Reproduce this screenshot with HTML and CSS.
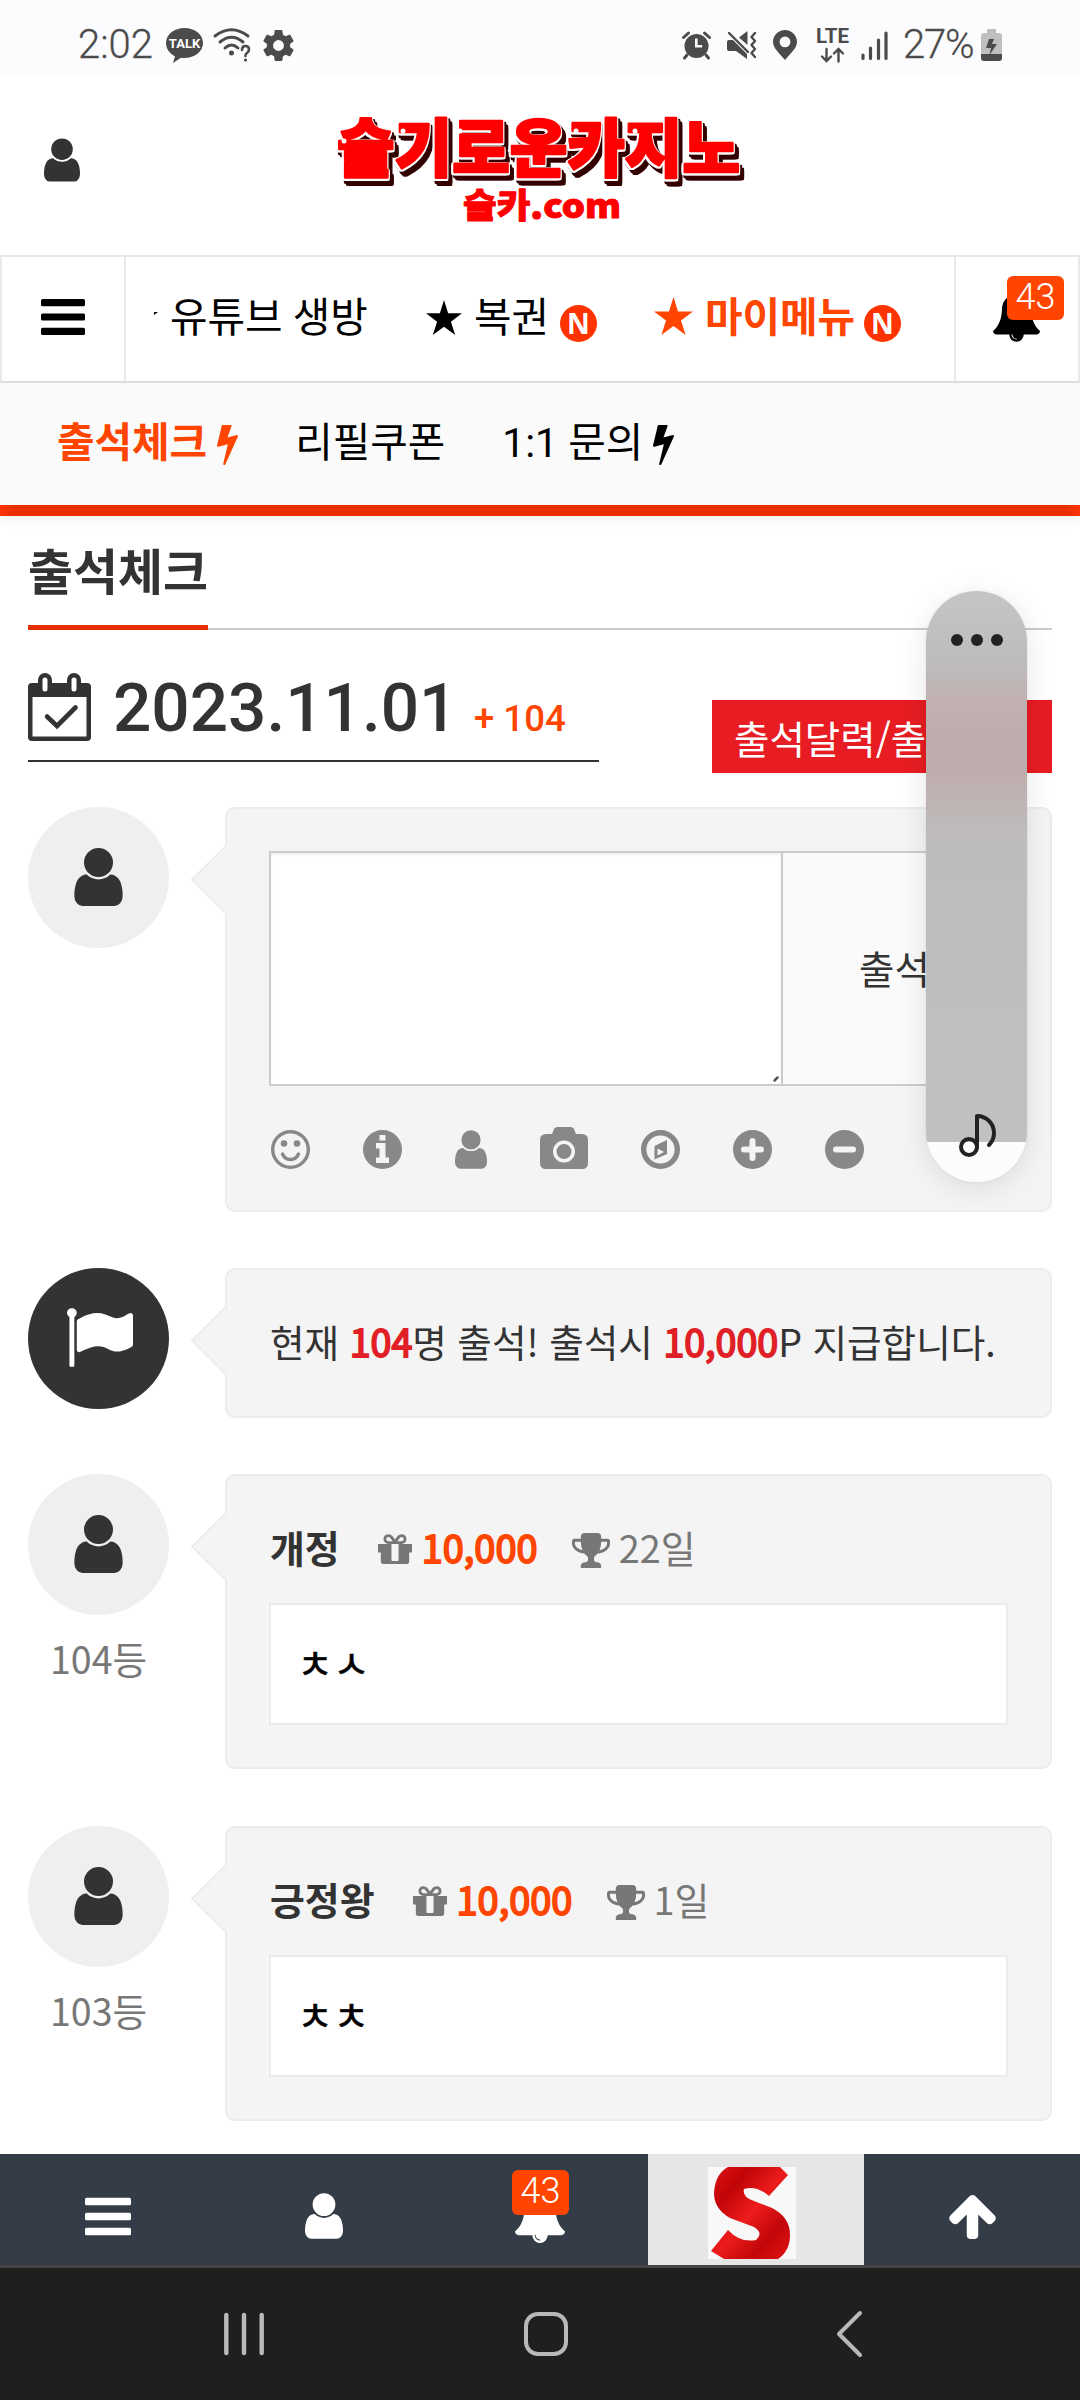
FILE: index.html
```html
<!DOCTYPE html>
<html lang="ko">
<head>
<meta charset="utf-8">
<title>출석체크</title>
<link rel="stylesheet" href="styles.css">
</head>
<body>
<svg class="defs" width="0" height="0">
  <symbol id="user" viewBox="0 128 1280 1536"><path d="M1280 1399q0 109-62.500 187t-150.500 78h-854q-88 0-150.500-78t-62.500-187q0-85 8.500-160.500t31.500-152 58.500-131 94-89 134.500-34.500q131 128 313 128t313-128q76 0 134.500 34.500t94 89 58.500 131 31.500 152 8.500 160.500zm-256-887q0 159-112.500 271.500t-271.500 112.500-271.500-112.500-112.500-271.500 112.500-271.500 271.500-112.500 271.500 112.500 112.500 271.500z"/></symbol>
  <symbol id="bars" viewBox="0 0 44 36"><rect width="44" height="7.200" rx="1.500"/><rect y="14.400" width="44" height="7.200" rx="1.500"/><rect y="28.800" width="44" height="7.200" rx="1.500"/></symbol>
  <symbol id="bolt" viewBox="0 0 896 1664" preserveAspectRatio="none"><path d="M885 438q18 20 7 44l-540 1157q-13 25-42 25-4 0-14-2-17-5-25.500-19t-4.500-30l197-808-406 101q-4 1-12 1-18 0-31-11-18-15-13-39l201-825q4-16 17-26t31-10h328q19 0 32 12.500t13 29.500q0 8-5 18l-171 463 396-98q8-2 12-2 19 0 34 15z"/></symbol>
  <symbol id="bell" viewBox="64 0 1664 1792"><path d="M912 1696q0-16-16-16-59 0-101.500-42.500t-42.500-101.500q0-16-16-16t-16 16q0 73 51.500 124.500t124.500 51.500q16 0 16-16zm816-288q0 52-38 90t-90 38h-448q0 106-75 181t-181 75-181-75-75-181h-448q-52 0-90-38t-38-90q50-42 91-88t85-119.500 74.500-158.500 50-206 19.500-260q0-152 117-282.500t307-158.500q-8-19-8-39 0-40 28-68t68-28 68 28 28 68q0 20-8 39 190 28 307 158.500t117 282.500q0 139 19.500 260t50 206 74.500 158.500 85 119.500 91 88z"/></symbol>
  <symbol id="gift" viewBox="0 192 1536 1344"><path d="M928 1356v-716h-320v716q0 25 18 38.500t46 13.500h192q28 0 46-13.500t18-38.500zm-456-844h195l-126-161q-26-31-69-31-40 0-68 28t-28 68 28 68 68 28zm688-96q0-40-28-68t-68-28q-43 0-69 31l-125 161h194q40 0 68-28t28-68zm376 256v320q0 14-9 23t-23 9h-96v416q0 40-28 68t-68 28h-1088q-40 0-68-28t-28-68v-416h-96q-14 0-23-9t-9-23v-320q0-14 9-23t23-9h440q-93 0-158.500-65.500t-65.500-158.500 65.500-158.500 158.500-65.500q107 0 168 77l128 165 128-165q61-77 168-77 93 0 158.500 65.500t65.500 158.500-65.500 158.500-158.500 65.500h440q14 0 23 9t9 23z"/></symbol>
  <symbol id="trophy" viewBox="64 128 1664 1536"><path d="M522 883q-74-162-74-371h-256v96q0 78 94.500 162t235.500 113zm1078-275v-96h-256q0 209-74 371 141-29 235.500-113t94.500-162zm128-128v128q0 71-41.500 143t-112 130-173 97.500-215.500 44.500q-42 54-95 95-38 34-52.500 72.500t-14.500 89.500q0 54 30.500 91t97.500 37q75 0 133.500 45.500t58.500 114.500v64q0 14-9 23t-23 9h-832q-14 0-23-9t-9-23v-64q0-69 58.500-114.500t133.500-45.500q67 0 97.500-37t30.500-91q0-51-14.500-89.500t-52.500-72.500q-53-41-95-95-113-5-215.500-44.500t-173-97.500-112-130-41.500-143v-128q0-40 28-68t68-28h288v-96q0-66 47-113t113-47h576q66 0 113 47t47 113v96h288q40 0 68 28t28 68z"/></symbol>
  <symbol id="star" viewBox="0 0 39 38"><path d="M19.500 0l4.500 14.500H39L27 23.500 31.600 38l-12.100-9L7.400 38 12 23.500 0 14.500h15z"/></symbol>
</svg>

<div class="statusbar">
  <span class="clock">2:02</span>
  <svg class="st-talk" viewBox="0 0 37 35"><path d="M18.500 0C8.300 0 0 6.600 0 15c0 6 4 10.800 9 13.200L7 35l8-5.200c1.200.2 2.400.2 3.500.2C28.700 30 37 23.400 37 15S28.700 0 18.500 0z"/><text x="18.500" y="20" text-anchor="middle">TALK</text></svg>
  <svg class="st-wifi" viewBox="0 0 38 34"><g fill="none" stroke="#4b4b4b" stroke-width="3" stroke-linecap="round"><path d="M2 8Q18.500-4.500 35 8M7 14Q18.500 4.500 30 14M12 20Q18.500 14 25 20"/><path d="M29 22q0-4 3.500-4t3.500 3.500q0 2-2 3.500t-1.500 3" stroke-width="2.600"/></g><circle cx="18.500" cy="25" r="2.500"/><circle cx="32.500" cy="32" r="1.600"/></svg>
  <svg class="st-gear" viewBox="2 2 20 20"><path d="M19.430 12.980c.04-.32.07-.64.07-.98s-.03-.66-.07-.98l2.110-1.650c.19-.15.24-.42.12-.64l-2-3.460c-.12-.22-.39-.3-.61-.22l-2.490 1c-.52-.4-1.080-.73-1.690-.98l-.38-2.650A.488.488 0 0 0 14 2h-4c-.25 0-.46.18-.49.42l-.38 2.650c-.61.25-1.170.59-1.690.98l-2.490-1c-.23-.09-.49 0-.61.22l-2 3.460c-.13.22-.07.49.12.64l2.110 1.650c-.04.32-.07.65-.07.98s.03.66.07.98l-2.110 1.650c-.19.15-.24.42-.12.64l2 3.460c.12.22.39.3.61.22l2.490-1c.52.4 1.080.73 1.690.98l.38 2.650c.03.24.24.42.49.42h4c.25 0 .46-.18.49-.42l.38-2.650c.61-.25 1.170-.59 1.690-.98l2.490 1c.23.09.49 0 .61-.22l2-3.460c.12-.22.07-.49-.12-.64zM12 15.500A3.500 3.500 0 1 1 12 8.500a3.500 3.500 0 0 1 0 7z"/></svg>
  <span class="grow"></span>
  <svg class="st-alarm" viewBox="0 0 29 28"><path fill-rule="evenodd" d="M14.500 3a12 12 0 1 0 0 24 12 12 0 0 0 0-24zM13 7.500h2.600V14h4.600v2.600H13z"/><path d="M1.500 6.500l5-4.500M27.500 6.500l-5-4.500M5 24l-2.500 3M24 24l2.500 3" stroke="#4b4b4b" stroke-width="3" stroke-linecap="round"/></svg>
  <svg class="st-mute" viewBox="0 0 30 28"><path d="M0 11q0-2 2-2h4l14 14v5L9 20H2q-2 0-2-2zM20.500 0v14L12 6.500z"/><path d="M2 2l19 19" stroke="#4b4b4b" stroke-width="2.400" stroke-linecap="round"/><path d="M28 2l-3.500 4L28 10l-3.500 4L28 18l-3.500 4L28 26" fill="none" stroke="#4b4b4b" stroke-width="2.400" stroke-linecap="round" stroke-linejoin="round"/></svg>
  <svg class="st-pin" viewBox="0 0 24 30"><path fill-rule="evenodd" d="M12 0C5.400 0 0 5.200 0 11.800 0 18 6 23 12 30c6-7 12-12 12-18.200C24 5.200 18.600 0 12 0zm0 6.500a5.400 5.400 0 1 1 0 10.800 5.400 5.400 0 0 1 0-10.800z"/></svg>
  <span class="st-lte"><b>LTE</b><svg viewBox="0 0 24 14"><path d="M5.500 1v11.500M1 8.500l4.500 4.500L10 8.500M17.500 13.500V1.500M13 5.500L17.500 1 22 5.500" fill="none" stroke="#4b4b4b" stroke-width="2.400" stroke-linecap="round"/></svg></span>
  <svg class="st-signal" viewBox="0 0 27 29"><path d="M2 24v3.500M9.500 17v10.500M17.500 9v18.500M25 2v25.500" stroke="#4b4b4b" stroke-width="3.200" stroke-linecap="round"/></svg>
  <span class="percent">27%</span>
  <svg class="st-batt" viewBox="0 0 21 32"><path fill="#bfbfbf" d="M6 0h9v4h3q3 0 3 3v19H0V7q0-3 3-3h3z"/><path d="M0 25h21v4q0 3-3 3H3q-3 0-3-3z"/><path d="M8 10h5l-2 5h5L8.500 26l1.500-7H5z"/></svg>
</div>

<header class="header">
  <svg class="header-user"><use href="#user"/></svg>
  <svg class="logo" viewBox="0 0 420 112">
    <g class="logo-main">
      <text x="7" y="57" textLength="403" lengthAdjust="spacingAndGlyphs">슬기로운카지노</text>
    </g>
    <g fill="#fff"><circle cx="14" cy="27" r="2.500"/><circle cx="73" cy="17" r="2.500"/><circle cx="130" cy="17" r="2.500"/><circle cx="246" cy="17" r="2.500"/><circle cx="305" cy="17" r="2.500"/></g>
    <text class="logo-sub" x="133" y="104" textLength="158" lengthAdjust="spacingAndGlyphs">슬카.com</text>
  </svg>
</header>

<nav class="nav">
  <a class="nav-side"><svg class="nav-bars"><use href="#bars"/></svg></a>
  <div class="nav-list">
    <svg class="nav-tip" viewBox="0 0 4 3"><path d="M0 0h4L0 3z"/></svg>
    <a class="nav-a">유튜브 생방</a>
    <a class="nav-b"><svg><use href="#star"/></svg><span>복권</span><i class="new">N</i></a>
    <a class="nav-c"><svg><use href="#star"/></svg><span>마이메뉴</span><i class="new">N</i></a>
  </div>
  <a class="nav-side nav-alarm"><svg class="bell"><use href="#bell"/></svg><span class="count">43</span></a>
</nav>

<div class="subnav">
  <a class="on"><span>출석체크</span><svg><use href="#bolt"/></svg></a>
  <a><span>리필쿠폰</span></a>
  <a><span>1:1 문의</span><svg><use href="#bolt"/></svg></a>
</div>
<div class="redline"></div>

<main class="main">
  <h1 class="title"><span>출석체크</span></h1>

  <div class="daybar">
    <div class="day">
      <svg class="cal" viewBox="0 0 63 68"><path fill-rule="evenodd" d="M4 10h6V7a7 7 0 0 1 14 0v3h15V7a7 7 0 0 1 14 0v3h6q4 0 4 4v50q0 4-4 4H4q-4 0-4-4V14q0-4 4-4zM4.500 24v39.500h54V24zM14.500 7v9a2.500 2.500 0 0 0 5 0V7a2.500 2.500 0 0 0-5 0zm29 0v9a2.500 2.500 0 0 0 5 0V7a2.500 2.500 0 0 0-5 0z"/><path d="M19 43.500l10 9.500 18.500-18.500" fill="none" stroke="#333" stroke-width="4.600" stroke-linecap="round"/></svg>
      <span class="date">2023.11.01</span>
      <span class="plus">+ 104</span>
    </div>
    <a class="calbtn">출석달력/출석부</a>
  </div>

  <section class="post">
    <div class="who"><div class="avatar"><svg><use href="#user"/></svg></div></div>
    <div class="bubble form">
      <div class="field"><div class="area"><svg viewBox="0 0 6 6"><path d="M1.500 4.500l3-3" stroke="#555" stroke-width="2.500" stroke-linecap="round"/></svg></div><div class="submit">출석</div></div>
      <div class="tools">
        <svg viewBox="0 0 39 39"><circle cx="19.500" cy="19.500" r="17.800" fill="none" stroke="#888" stroke-width="3.400"/><circle cx="13" cy="13.500" r="3.300"/><circle cx="26" cy="13.500" r="3.300"/><path d="M11.500 24q2.500 5.500 8 5.500t8-5.500" fill="none" stroke="#888" stroke-width="3.400" stroke-linecap="round"/></svg>
        <svg viewBox="0 0 39 39"><circle cx="19.500" cy="19.500" r="19.500"/><path fill="#f4f4f4" d="M16.500 5h6v5.500h-6zM13 13h9.500v14.500H26V33H13v-5.500h3.500v-9H13z"/></svg>
        <svg class="t-user"><use href="#user"/></svg>
        <svg class="t-cam" viewBox="0 0 48 42"><path fill-rule="evenodd" d="M6 7h6l2-5q1-2 3.500-2h13q2.500 0 3.500 2l2 5h6q6 0 6 6v23q0 6-6 6H6q-6 0-6-6V13q0-6 6-6zm18 6.500a11 11 0 1 0 0 22 11 11 0 0 0 0-22zm0 3.500a7.500 7.500 0 1 1 0 15 7.500 7.500 0 0 1 0-15z"/></svg>
        <svg viewBox="0 0 39 39"><circle cx="19.500" cy="19.500" r="16.800" fill="none" stroke="#888" stroke-width="5.400"/><path fill-rule="evenodd" d="M26 10v14L13.500 29.500V16zM16.500 18.500v7l6.500-3.600z"/></svg>
        <svg viewBox="0 0 39 39"><circle cx="19.500" cy="19.500" r="19.500"/><path d="M11 19.500h17M19.500 11v17" stroke="#f4f4f4" stroke-width="6" stroke-linecap="round"/></svg>
        <svg viewBox="0 0 39 39"><circle cx="19.500" cy="19.500" r="19.500"/><path d="M11 19.500h17" stroke="#f4f4f4" stroke-width="6" stroke-linecap="round"/></svg>
      </div>
    </div>
  </section>

  <section class="post">
    <div class="who"><div class="avatar dark"><svg class="flag" viewBox="64 128 1728 1536"><path d="M320 256q0 72-64 110v1266q0 13-9.500 22.500t-22.500 9.500h-64q-13 0-22.500-9.500t-9.500-22.500v-1266q-64-38-64-110 0-53 37.500-90.500t90.500-37.500 90.500 37.500 37.500 90.500zm1472 64v763q0 25-12.500 38.500t-39.500 27.500q-215 116-369 116-61 0-123.500-22t-108.500-48-115.500-48-142.500-22q-192 0-464 146-17 9-33 9-26 0-45-19t-19-45v-742q0-32 31-55 21-14 79-43 236-120 421-120 107 0 200 29t219 88q38 19 88 19 54 0 117.500-21t110-47 88-47 54.500-21q26 0 45 19t19 45z"/></svg></div></div>
    <div class="bubble notice"><p>현재 <b>104</b>명 출석! 출석시 <b>10,000</b>P 지급합니다.</p></div>
  </section>

  <section class="post">
    <div class="who"><div class="avatar"><svg><use href="#user"/></svg></div><span class="rank">104등</span></div>
    <div class="bubble entry">
      <div class="meta"><b class="name">개정</b><svg class="gift"><use href="#gift"/></svg><b class="point">10,000</b><svg class="trophy"><use href="#trophy"/></svg><span class="days">22일</span></div>
      <div class="say">ㅊㅅ</div>
    </div>
  </section>

  <section class="post">
    <div class="who"><div class="avatar"><svg><use href="#user"/></svg></div><span class="rank">103등</span></div>
    <div class="bubble entry">
      <div class="meta"><b class="name">긍정왕</b><svg class="gift"><use href="#gift"/></svg><b class="point">10,000</b><svg class="trophy"><use href="#trophy"/></svg><span class="days">1일</span></div>
      <div class="say">ㅊㅊ</div>
    </div>
  </section>
</main>

<div class="volume">
  <svg class="v-dots" viewBox="0 0 52 12"><circle cx="6" cy="6" r="6"/><circle cx="26" cy="6" r="6"/><circle cx="46" cy="6" r="6"/></svg>
  <svg class="v-note" viewBox="0 0 37 44"><g fill="none" stroke="#222" stroke-width="4" stroke-linecap="round" stroke-linejoin="round"><circle cx="10" cy="33" r="8"/><path d="M18 33V2c10 0 17 8 17 17q0 7-5 12"/></g></svg>
</div>

<footer class="tabbar">
  <a><svg class="tb-bars"><use href="#bars"/></svg></a>
  <a><svg class="tb-user"><use href="#user"/></svg></a>
  <a class="tb-alarm"><svg class="tb-bell"><use href="#bell"/></svg><span class="count">43</span></a>
  <a class="tb-site">
    <svg class="tb-logo" viewBox="0 0 88 92"><defs><linearGradient id="sg" x1="0" y1="0" x2="1" y2="1"><stop offset="0" stop-color="#e01212"/><stop offset=".25" stop-color="#c00508"/><stop offset=".5" stop-color="#ee1c1c"/><stop offset=".75" stop-color="#c2070a"/><stop offset="1" stop-color="#e01212"/></linearGradient></defs><rect width="88" height="92" fill="#f8f8f8"/><path fill="url(#sg)" d="M20 0H72L80 8 61 29Q48 18 36 22 34 30 46 34L64 41Q82 50 82 68 82 84 70 92H16L3 84 20 63Q32 76 48 73 56 66 46 60L22 51Q6 42 6 26 7 7 20 0z"/></svg>
  </a>
  <a><svg class="tb-up" viewBox="117 192 1558 1472"><path d="M1675 971q0 51-37 90l-75 75q-38 38-91 38-54 0-90-38l-294-293v704q0 52-37.500 84.500t-90.500 32.500h-128q-53 0-90.500-32.500t-37.500-84.500v-704l-294 293q-36 38-90 38t-90-38l-75-75q-38-38-38-90 0-53 38-91l651-651q35-37 90-37 54 0 91 37l651 651q37 39 37 91z"/></svg></a>
</footer>

<div class="sysnav">
  <svg class="s-recent" viewBox="0 0 40 42"><path d="M2.300 2v38M20 2v38M37.700 2v38" stroke-width="4.400"/></svg>
  <svg class="s-home" viewBox="0 0 44 44"><rect x="2" y="2" width="40" height="40" rx="12" stroke-width="4"/></svg>
  <svg class="s-back" viewBox="0 0 26 46"><path d="M24 2L3 23l21 21" stroke-width="4"/></svg>
</div>
</body>
</html>
```
FILE: styles.css
```css
* { box-sizing: border-box; }
body {
  margin: 0;
  width: 1080px;
  height: 2400px;
  position: relative;
  overflow: hidden;
  display: flex;
  flex-direction: column;
  background: #fff;
  color: #333;
  font-family: "Noto Sans CJK KR", sans-serif;
}
svg { display: block; flex: none; overflow: visible; }
.defs { position: absolute; }
.grow { flex: 1; }

/* phone status bar */
.statusbar {
  flex: none;
  height: 75px;
  padding: 15px 78px 0;
  display: flex;
  align-items: center;
  background: #fcfcfe;
  fill: #4b4b4b;
  color: #4b4b4b;
  font-family: Roboto, sans-serif;
}
.clock, .percent { font-size: 40px; font-weight: 300; line-height: 60px; -webkit-text-stroke: 0.3px #4b4b4b; }
.clock { width: 88px; }
.percent { width: 78px; letter-spacing: -1.200px; white-space: nowrap; }
.st-talk { width: 37px; height: 35px; }
.st-talk text { font: 700 13px Roboto, sans-serif; fill: #fff; }
.st-wifi { width: 38px; height: 34px; margin-left: 10px; }
.st-gear { width: 31px; height: 33px; margin-left: 12px; }
.st-alarm { width: 29px; height: 28px; }
.st-mute { width: 30px; height: 28px; margin-left: 16px; }
.st-pin { width: 24px; height: 30px; margin-left: 16px; }
.st-lte { width: 33px; margin-left: 19px; display: flex; flex-direction: column; align-items: center; gap: 4px; }
.st-lte b { font-size: 20.500px; line-height: 15px; font-weight: 700; }
.st-lte svg { width: 24px; height: 14px; }
.st-signal { width: 27px; height: 29px; margin: 0 15px 0 12px; }
.st-batt { width: 21px; height: 32px; }

/* site header */
.header { flex: none; height: 180px; display: flex; align-items: flex-start; }
.header-user { width: 36px; height: 44px; margin: 63px 0 0 44px; fill: #333; }
.logo { width: 420px; height: 112px; margin: 39px 0 0 250px; }
.logo text { font-family: "Noto Sans CJK KR", sans-serif; font-weight: 900; stroke-linejoin: round; }
.logo-main {
  filter: drop-shadow(1.5px 0 0 #fff) drop-shadow(-1.5px 0 0 #fff) drop-shadow(0 2px 0 #fff) drop-shadow(2px 3px 0 #300) drop-shadow(2px 2px 0 #300);
}
.logo-main text { font-size: 63px; fill: #f00; stroke: #f00; stroke-width: 2.500px; }
.logo-sub { font-size: 34px; fill: #f00; stroke: #f00; stroke-width: 1px; }

/* main menu */
.nav {
  flex: none;
  height: 128px;
  display: flex;
  border: 2px solid #e9e9e9;
  border-bottom-color: #ddd;
  font-family: Roboto, "Noto Sans CJK KR", sans-serif;
  font-size: 40.800px;
  line-height: 123px;
  color: #000;
}
.nav-side { width: 124px; display: flex; position: relative; }
.nav-side:first-child { border-right: 2px solid #e9e9e9; }
.nav-alarm { border-left: 2px solid #e9e9e9; }
.nav-bars { width: 44px; height: 36px; margin: 42px 0 0 39px; }
.nav-list { flex: 1; display: flex; white-space: nowrap; }
.nav-list a { display: flex; }
.nav-tip { width: 4px; height: 3px; margin: 55px 0 0 28px; }
.nav-a { width: 256px; margin-left: 12px; }
.nav-b svg { width: 36px; height: 35px; margin-top: 43px; }
.nav-b span { width: 86px; margin-left: 12px; }
.nav-c { margin-left: 57px; color: #ff4500; fill: #ff4500; font-weight: 700; }
.nav-c svg { width: 39px; height: 38px; margin-top: 40px; }
.nav-c span { width: 159px; margin-left: 12px; }
.new {
  width: 37px;
  height: 37px;
  margin-top: 48px;
  border-radius: 50%;
  background: #ff3300;
  color: #fff;
  font: 700 28px/36px "Noto Sans", sans-serif;
  text-align: center;
}
.bell { width: 47px; height: 51px; margin: 34px 0 0 37px; }
.count {
  position: absolute;
  left: 51px;
  top: 19px;
  width: 57px;
  height: 44px;
  border-radius: 6px;
  background: #ff4500;
  color: #fff;
  font: 300 36px/42px Roboto, sans-serif;
  text-align: center;
}

.subnav {
  flex: none;
  height: 122px;
  padding-left: 57px;
  display: flex;
  background: #fafafa;
  color: #000;
  font-family: Roboto, "Noto Sans CJK KR", sans-serif;
  font-size: 40.800px;
  line-height: 121px;
  white-space: nowrap;
}
.subnav a { display: flex; margin-right: 57px; }
.subnav svg { width: 21px; height: 40px; margin: 42px 0 0 10px; }
.subnav .on { color: #ff4500; fill: #ff4500; font-weight: 700; }
.redline {
  flex: none;
  height: 11px;
  background: linear-gradient(90deg, #ff3300, #ea3000 12px, #ea3000 1068px, #ff3300);
  box-shadow: 0 5px 12px -2px rgba(0, 0, 0, 0.09);
}

/* content */
.main { flex: none; height: 1638px; padding: 0 28px; }
.title { margin: 0; height: 114px; border-bottom: 2px solid #ccc; font-size: 48.900px; line-height: 105px; font-weight: 700; }
.title span { display: block; width: 180px; height: 114px; border-bottom: 5px solid #e63000; white-space: nowrap; }

.daybar { display: flex; justify-content: space-between; height: 177px; }
.day { width: 571px; height: 132px; border-bottom: 2px solid #333; display: flex; font-family: Roboto, sans-serif; font-weight: 500; white-space: nowrap; }
.cal { width: 63px; height: 68px; margin-top: 43px; fill: #333; }
.date { width: 361px; margin-left: 22px; font-size: 67.500px; line-height: 155px; }
.plus { font-size: 36.560px; line-height: 177px; color: #ff4500; }
.calbtn {
  width: 340px;
  height: 73px;
  margin-top: 70px;
  padding-left: 22px;
  background: #e81c23;
  color: #fff;
  font-size: 38.500px;
  line-height: 75px;
  overflow: hidden;
  white-space: nowrap;
}

.post { display: flex; margin-bottom: 56px; }
.who { width: 141px; margin-right: 56px; display: flex; flex-direction: column; align-items: center; }
.avatar { width: 141px; height: 141px; border-radius: 50%; background: #efefef; display: flex; justify-content: center; fill: #333; }
.avatar svg { width: 49px; height: 58px; margin-top: 41px; }
.avatar.dark { background: #333; fill: #fff; }
.avatar .flag { width: 66px; height: 59px; margin-top: 40px; margin-left: 3px; }
.rank { margin-top: 12px; font-size: 37.500px; line-height: 61px; color: #777; }

.bubble { position: relative; width: 827px; padding: 42px; background: #f4f4f4; border: 2px solid #ececec; border-radius: 10px; }
.bubble::before {
  content: "";
  position: absolute;
  left: -26px;
  top: 45px;
  width: 49px;
  height: 49px;
  background: #f4f4f4;
  border: solid #ececec;
  border-width: 0 0 2px 2px;
  transform: rotate(45deg);
  clip-path: polygon(0 0, 100% 100%, 0 100%);
}
.form { height: 405px; }
.field { display: flex; height: 235px; width: 739px; }
.area { width: 514px; border: 2px solid #ccc; background: #fff; box-shadow: inset 0 2px 3px rgba(0, 0, 0, 0.06); display: flex; justify-content: flex-end; align-items: flex-end; }
.area svg { width: 6px; height: 6px; margin: 2px; }
.submit { flex: 1; border: solid #ccc; border-width: 2px 2px 2px 0; background: #fafafa; font-size: 38.500px; line-height: 228px; text-align: center; }
.tools { display: flex; align-items: center; height: 42px; margin: 42px 0 0 2px; fill: #888; }
.tools svg { width: 39px; height: 39px; margin-right: 53px; }
.tools .t-user { width: 32px; }
.tools .t-cam { width: 48px; height: 42px; margin-top: -3px; }

.notice { height: 150px; }
.notice p { margin: 0; padding-left: 1px; font-size: 37.600px; line-height: 58px; white-space: nowrap; }
.notice b { color: #e01f26; font-weight: 400; -webkit-text-stroke: 1.800px #e01f26; }

.entry { height: 295px; padding-top: 40px; }
.post:nth-of-type(3) { margin-bottom: 57px; }
.meta { display: flex; height: 87px; fill: #777; font-size: 37.900px; line-height: 62px; white-space: nowrap; }
.name { margin-left: 1px; margin-right: 38px; }
.gift { width: 34px; height: 30px; margin-top: 18px; }
.point { width: 150px; margin-left: 10px; color: #ff4500; font-weight: 400; -webkit-text-stroke: 1.800px #ff4500; }
.trophy { width: 38px; height: 35px; margin-top: 17px; }
.days { margin-left: 9px; color: #777; }
.say { height: 122px; padding-left: 26px; border: 2px solid #ececec; background: #fff; color: #000; font-size: 39.400px; line-height: 114px; font-weight: 400; -webkit-text-stroke: 0.6px #000; }

/* floating volume slider */
.volume {
  position: absolute;
  left: 926px;
  top: 591px;
  width: 101px;
  height: 591px;
  border-radius: 51px;
  background: linear-gradient(#c5c5c5 0, #bdbcbc 70px, #c1b1b1 110px, #beacac 150px, #c0aeae 185px, #bebaba 235px, #bdbdbd 290px, #c1c1c1 551px, #fcfcfc 551px);
  box-shadow: 0 6px 30px rgba(0, 0, 0, 0.1), 0 0 3px rgba(0, 0, 0, 0.08);
  display: flex;
  flex-direction: column;
  align-items: center;
  fill: #222;
}
.v-dots { width: 52px; height: 12px; margin-top: 43px; }
.v-note { width: 37px; height: 44px; margin-top: 468px; margin-left: 2px; }

/* bottom tabs */
.tabbar { flex: none; height: 114px; border-bottom: 3px solid #444; display: flex; background: #333c47; fill: #fff; }
.tabbar a { width: 216px; display: flex; justify-content: center; align-items: flex-start; position: relative; }
.tb-bars { width: 46px; height: 39px; margin-top: 43px; margin-left: -1px; }
.tb-user { width: 38px; height: 46px; margin-top: 39px; }
.tb-bell { width: 50px; height: 54px; margin-top: 35px; }
.tb-alarm .count { left: 80px; top: 16px; height: 45px; }
.tabbar .tb-site { background: #e6e6e6; }
.tb-logo { width: 88px; height: 92px; margin-top: 13px; margin-left: -8px; }
.tb-up { width: 47px; height: 44px; margin-top: 41px; }

.sysnav { flex: none; height: 132px; display: flex; align-items: flex-start; background: #1f1f1f; fill: none; stroke: #b9b9b9; stroke-linecap: round; stroke-linejoin: round; }
.s-recent { width: 40px; height: 42px; margin: 45px 0 0 224px; }
.s-home { width: 44px; height: 44px; margin: 44px 0 0 260px; }
.s-back { width: 26px; height: 46px; margin: 43px 0 0 268px; }
```
